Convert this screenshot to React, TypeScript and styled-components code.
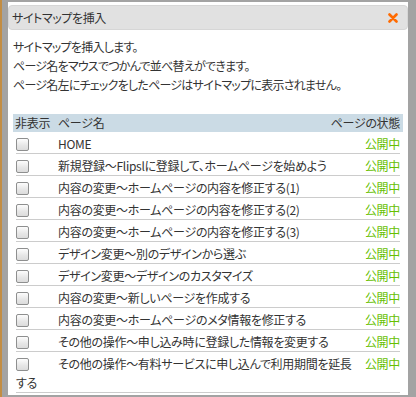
import React from "react";
import styled, { createGlobalStyle } from "styled-components";

const Global = createGlobalStyle`
  html, body { margin: 0; padding: 0; }
  body {
    width: 416px;
    height: 397px;
    overflow: hidden;
    background: linear-gradient(to right, #c38d43 0 2px, #a3a3a3 2px 100%);
    font-family: "Noto Sans CJK JP", "Noto Sans", sans-serif;
    font-size: 12px;
    color: #333;
    font-feature-settings: "palt";
    letter-spacing: -0.3px;
  }
`;

const Dialog = styled.div`
  box-sizing: border-box;
  width: 400px;
  height: 393px;
  margin: 2px 0 0 8px;
  background: #fff;
  padding-top: 3px;
`;

const TitleBar = styled.div`
  height: 23px;
  display: flex;
  align-items: center;
  justify-content: space-between;
  background: #e1e1e1;
  border: 1px solid #d6d6d6;
  border-radius: 4px;
  padding: 0 9px 0 3px;
  font-size: 12px;
  letter-spacing: -0.4px;
  color: #333;
`;

const Close = styled.svg`
  width: 10px;
  height: 10px;
  display: block;
`;

const Body = styled.div`
  padding: 7px 5px 0 5px;
`;

const Intro = styled.p`
  margin: 0;
  line-height: 19px;
  letter-spacing: -0.75px;
`;

const Table = styled.div`
  margin-top: 20px;
`;

const Header = styled.div`
  height: 18px;
  display: flex;
  align-items: center;
  background: #cbdbe5;
  padding: 0 3px 0 2px;
  line-height: 18px;
`;

const HeadCell = styled.span<{ $w?: number; $right?: boolean }>`
  ${(p) => (p.$w ? `width: ${p.$w}px;` : "flex: 1;")}
  ${(p) => (p.$right ? "text-align: right;" : "")}
`;

const List = styled.ul`
  list-style: none;
  margin: 0 3px;
  padding: 0;
`;

const Row = styled.li`
  padding: 2px 0 0 0;
  line-height: 19px;
  border-bottom: 1px solid #cccccc;
  &::after { content: ""; display: block; clear: both; }
`;

const Check = styled.input`
  appearance: none;
  -webkit-appearance: none;
  box-sizing: border-box;
  width: 13px;
  height: 13px;
  margin: 0;
  vertical-align: -2px;
  border: 1px solid #8e8f8f;
  border-radius: 2px;
  background: linear-gradient(#fdfdfd, #e6e6e6 60%, #dcdcdc);
`;

const Name = styled.span`
  margin-left: 29px;
`;

const Status = styled.span`
  float: right;
  margin-left: 6px;
  color: #66c000;
`;

const pages = [
  "HOME",
  "新規登録～Flipslに登録して、ホームページを始めよう",
  "内容の変更～ホームページの内容を修正する(1)",
  "内容の変更～ホームページの内容を修正する(2)",
  "内容の変更～ホームページの内容を修正する(3)",
  "デザイン変更～別のデザインから選ぶ",
  "デザイン変更～デザインのカスタマイズ",
  "内容の変更～新しいページを作成する",
  "内容の変更～ホームページのメタ情報を修正する",
  "その他の操作～申し込み時に登録した情報を変更する",
  "その他の操作～有料サービスに申し込んで利用期間を延長する",
];

export default function App() {
  return (
    <>
      <Global />
      <Dialog>
        <TitleBar>
          <span>サイトマップを挿入</span>
          <Close viewBox="0 0 10 10">
            <path d="M1.5 1.5 L8.5 8.5 M8.5 1.5 L1.5 8.5" stroke="#ff6a00" strokeWidth="2.6" strokeLinecap="round" />
          </Close>
        </TitleBar>
        <Body>
          <Intro>
            サイトマップを挿入します。
            <br />
            ページ名をマウスでつかんで並べ替えができます。
            <br />
            ページ名左にチェックをしたページはサイトマップに表示されません。
          </Intro>
          <Table>
            <Header>
              <HeadCell $w={43}>非表示</HeadCell>
              <HeadCell>ページ名</HeadCell>
              <HeadCell $right>ページの状態</HeadCell>
            </Header>
            <List>
              {pages.map((p) => (
                <Row key={p}>
                  <Status>公開中</Status>
                  <Check type="checkbox" />
                  <Name>{p}</Name>
                </Row>
              ))}
            </List>
          </Table>
        </Body>
      </Dialog>
    </>
  );
}
